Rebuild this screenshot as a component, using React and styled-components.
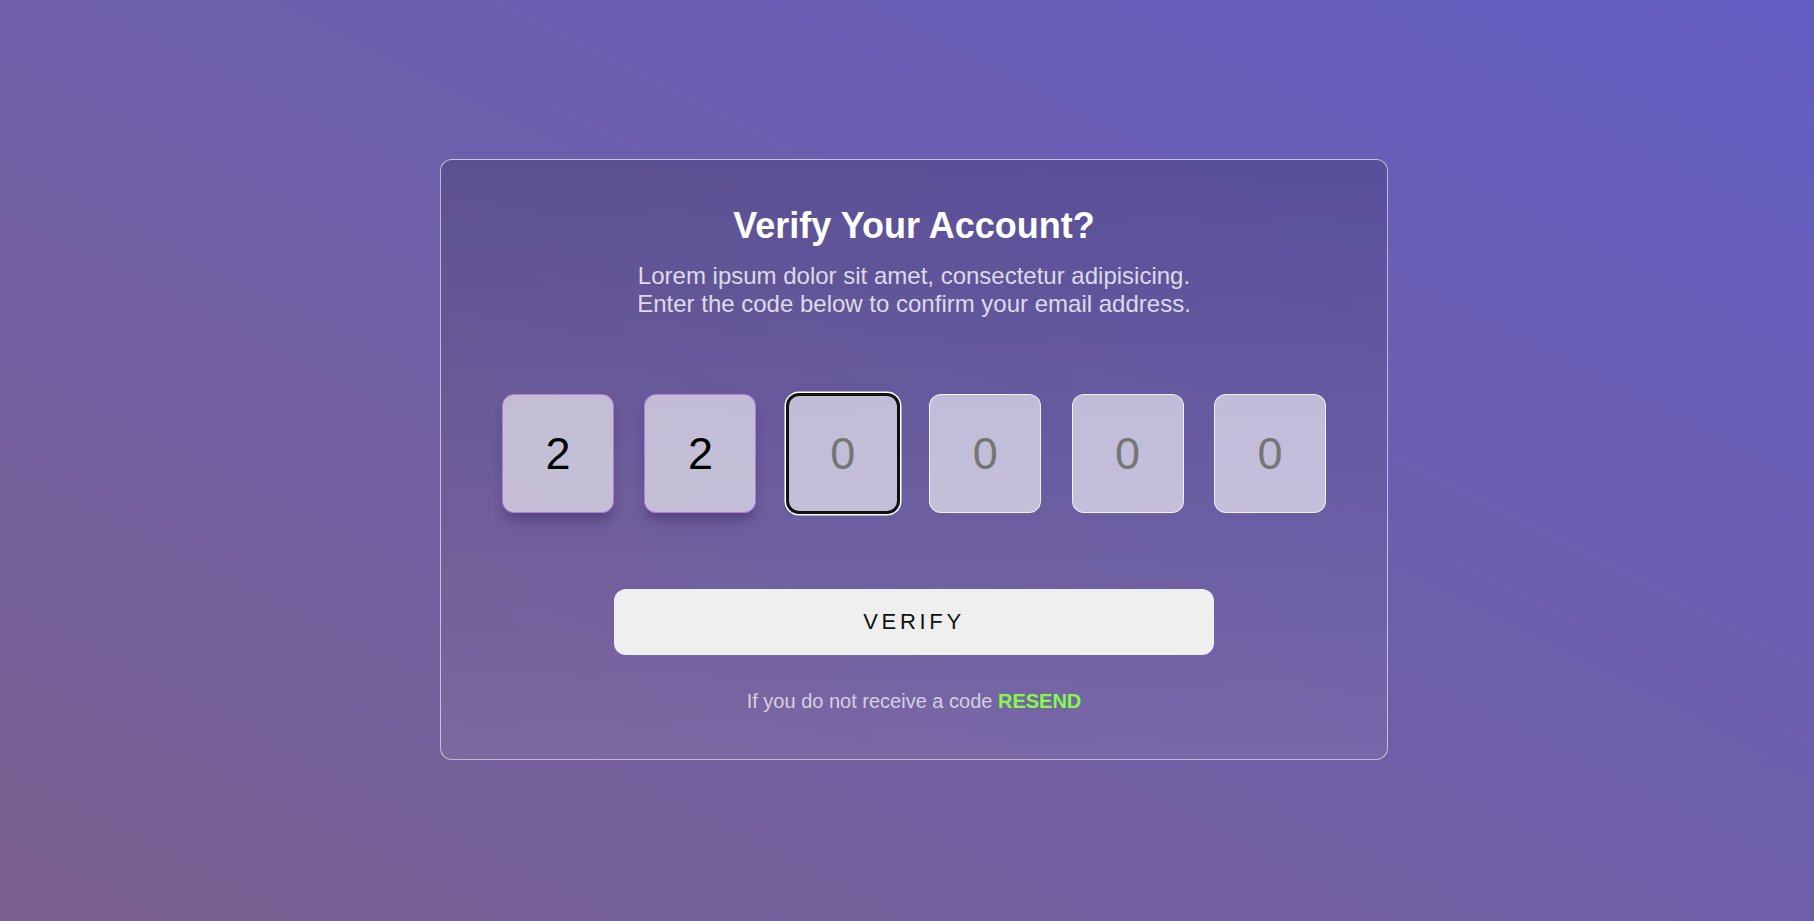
import React, { useState } from "react";
import styled, { createGlobalStyle, css } from "styled-components";

const GlobalStyle = createGlobalStyle`
  * {
    box-sizing: border-box;
  }
  html,
  body {
    margin: 0;
    padding: 0;
  }
  body {
    font-family: "Liberation Sans", Arial, sans-serif;
  }
`;

const VerifyPage = () => {
  const [digits, setDigits] = useState(["2", "2", "", "", "", ""]);
  const activeIndex = digits.findIndex((d) => d === "");

  const changeDigit = (index) => (e) => {
    const value = e.target.value.slice(-1);
    const next = [...digits];
    next[index] = value;
    setDigits(next);
  };

  return (
    <StyledPage>
      <Card>
        <Title>Verify Your Account?</Title>
        <Subtitle>
          Lorem ipsum dolor sit amet, consectetur adipisicing.
          <br />
          Enter the code below to confirm your email address.
        </Subtitle>

        <CodeRow>
          {digits.map((digit, i) => (
            <DigitInput
              key={i}
              type="text"
              inputMode="numeric"
              maxLength={1}
              placeholder="0"
              value={digit}
              onChange={changeDigit(i)}
              $filled={digit !== ""}
              $active={i === activeIndex}
            />
          ))}
        </CodeRow>

        <VerifyButton type="button">VERIFY</VerifyButton>

        <ResendText>
          If you do not receive a code <ResendLink href="#">RESEND</ResendLink>
        </ResendText>
      </Card>
    </StyledPage>
  );
};

export default function App() {
  return (
    <>
      <GlobalStyle />
      <VerifyPage />
    </>
  );
}

const StyledPage = styled.div`
  min-height: 100vh;
  display: flex;
  justify-content: center;
  align-items: center;
  padding: 0 0 2px 14px;
  background: linear-gradient(to top right, #7b6190, #635dc2);
`;

const Card = styled.div`
  width: 948px;
  display: flex;
  flex-direction: column;
  align-items: center;
  padding: 45px 0 46px;
  border: 1px solid rgba(255, 255, 255, 0.6);
  border-radius: 12px;
  background: linear-gradient(
    to bottom,
    rgba(0, 0, 0, 0.15),
    rgba(255, 255, 255, 0.05)
  );
`;

const Title = styled.h1`
  margin: 0;
  font-size: 36px;
  font-weight: bold;
  color: #fff;
  text-align: center;
`;

const Subtitle = styled.p`
  margin: 15px 0 0;
  font-size: 24px;
  color: rgba(255, 255, 255, 0.8);
  text-align: center;
`;

const CodeRow = styled.div`
  width: 824px;
  margin-top: 76px;
  display: flex;
  justify-content: space-between;
`;

const DigitInput = styled.input`
  width: 112px;
  height: 119px;
  border-radius: 12px;
  border: 1px solid rgba(255, 255, 255, 0.8);
  background: rgba(255, 255, 255, 0.6);
  font: inherit;
  font-size: 45px;
  color: #000;
  text-align: center;
  outline: none;

  &::placeholder {
    color: #757575;
  }

  ${(p) =>
    p.$filled &&
    css`
      border-color: #b47cd8;
      box-shadow: 0 10px 12px -2px rgba(40, 20, 70, 0.3);
    `}

  ${(p) =>
    p.$active &&
    css`
      outline: 3px solid #111;
      outline-offset: -2px;
      box-shadow: 0 0 0 2.5px #fff;
    `}
`;

const VerifyButton = styled.button`
  width: 600px;
  height: 66px;
  margin-top: 76px;
  border: none;
  border-radius: 12px;
  background: #efefef;
  font-family: inherit;
  font-size: 22px;
  letter-spacing: 3.7px;
  color: #111;
  cursor: pointer;
`;

const ResendText = styled.p`
  margin: 35px 0 0;
  font-size: 20px;
  color: rgba(255, 255, 255, 0.7);
`;

const ResendLink = styled.a`
  font-weight: bold;
  color: #84fa46;
  text-decoration: none;
`;
